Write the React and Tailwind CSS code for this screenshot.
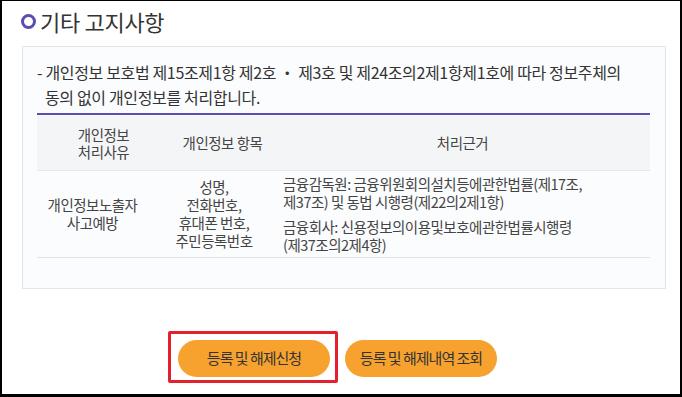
import React from "react";

export default function App() {
  const font = { fontFamily: '"Noto Sans CJK KR", "Noto Sans", sans-serif' };
  return (
    <div
      className="relative w-[682px] h-[397px] bg-white border-black border-l-2 border-t border-r-2 border-b-[3px] overflow-hidden text-[#333]"
      style={font}
    >
      <div className="flex items-center gap-[4px] pl-[19px] h-[40px]">
        <span className="block w-[15px] h-[15px] rounded-full border-[3px] border-[#5a4db4]" />
        <span className="text-[22px] leading-[28px] tracking-[-0.3px] text-[#333]">기타 고지사항</span>
      </div>

      <div className="ml-[20px] mt-[5px] w-[644px] border border-[#e3e5e8] bg-[#fbfcfd] pl-[14px] pr-[15px] pt-[13px] pb-[30px]">
        <div className="text-[16px] leading-[25px] tracking-[-0.35px] text-[#333]">
          <p>- 개인정보 보호법 제15조제1항 제2호 ・ 제3호 및 제24조의2제1항제1호에 따라 정보주체의</p>
          <p className="pl-[8px]">동의 없이 개인정보를 처리합니다.</p>
        </div>
        <div className="mt-[3px] h-[2px] bg-[#5a4fb0]" />
        <div className="grid grid-cols-[133px_105px_1fr] h-[56px] items-center bg-[#f4f5f7] text-[14.5px] leading-[17px] tracking-[-0.5px] text-[#444] text-center border-b border-[#e6e7ea]">
          <div>개인정보<br />처리사유</div>
          <div>개인정보 항목</div>
          <div>처리근거</div>
        </div>
        <div className="grid grid-cols-[111px_132px_1fr] h-[87px] items-center text-[14.5px] leading-[18px] tracking-[-0.5px] text-[#444] border-b border-[#e2e3e6]">
          <div className="text-center">개인정보노출자<br />사고예방</div>
          <div className="text-center">성명,<br />전화번호,<br />휴대폰 번호,<br />주민등록번호</div>
          <div className="pl-[3px] flex flex-col gap-[7px]">
            <p>금융감독원: 금융위원회의설치등에관한법률(제17조,<br />제37조) 및 동법 시행령(제22의2제1항)</p>
            <p>금융회사: 신용정보의이용및보호에관한법률시행령<br />(제37조의2제4항)</p>
          </div>
        </div>
      </div>

      <div className="relative flex gap-[15px] mt-[51px] pl-[176px]">
        <button className="w-[152px] h-[37px] rounded-full bg-[#f7a22f] text-[15px] tracking-[-1px] text-[#333]">등록 및 해제신청</button>
        <button className="w-[152px] h-[37px] rounded-full bg-[#f7a22f] text-[15px] tracking-[-1px] text-[#333]">등록 및 해제내역 조회</button>
        <div className="absolute left-[166px] top-[-9px] w-[170px] h-[52px] border-[3px] border-[#e3202b] rounded-[2px] pointer-events-none" />
      </div>
    </div>
  );
}
